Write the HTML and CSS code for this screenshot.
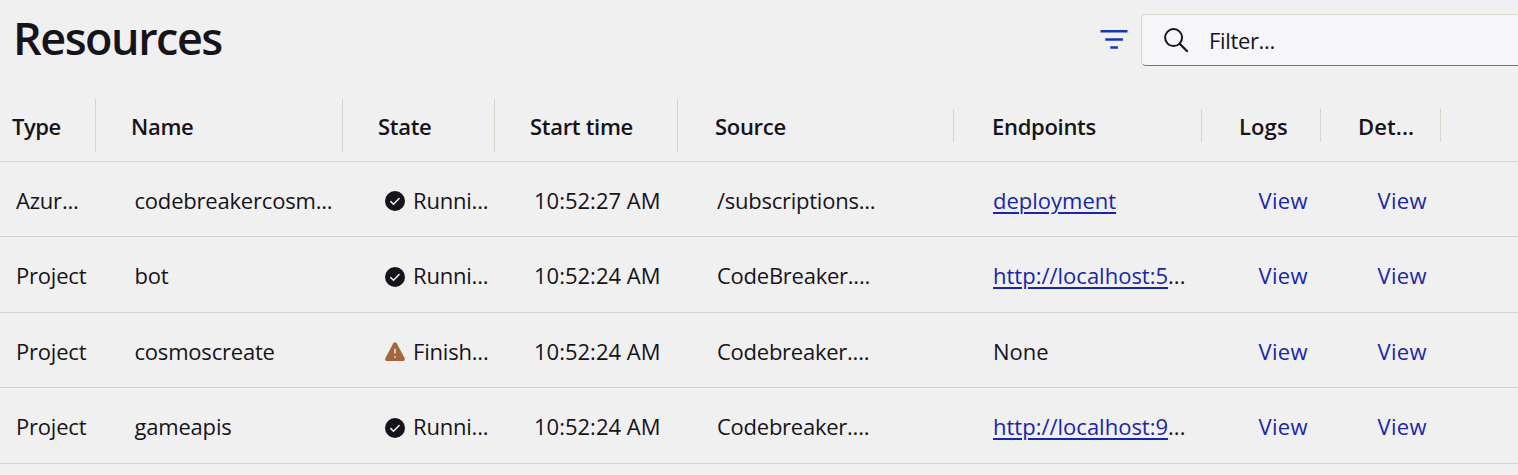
FILE: index.html
```html
<!DOCTYPE html>
<html lang="en">
<head>
<meta charset="utf-8">
<title>Resources</title>
<link rel="stylesheet" href="styles.css">
</head>
<body>
<svg class="sprite" width="0" height="0" aria-hidden="true">
  <symbol id="ok" viewBox="0 0 20 20">
    <circle cx="10" cy="10" r="10" fill="#17131a"/>
    <path d="M5.8 10.6l2.7 2.6 5.6-5.7" fill="none" stroke="#f0f0f0" stroke-width="1.5" stroke-linecap="round"/>
  </symbol>
  <symbol id="warn" viewBox="0 0 20 20">
    <path d="M8.3 1.2a2 2 0 0 1 3.4 0l8 15a2 2 0 0 1-1.8 2.9H2.1a2 2 0 0 1-1.8-2.9z" fill="#a4663f"/>
    <path d="M10 6.8v4.7M10 14.2v1.6" stroke="#f4e8e0" stroke-width="1.5"/>
  </symbol>
</svg>
<header class="toolbar">
  <h1 class="title">Resources</h1>
  <div class="tools">
    <svg class="filter-icon" width="28" height="20" viewBox="0 0 28 20"><path d="M0.5 1.2h27M5.3 9.4h17.6M10.3 17.5h7.6" stroke="#1437b8" stroke-width="2.5" fill="none"/></svg>
    <div class="search">
      <svg class="search-icon" width="24" height="25" viewBox="0 0 24 25"><circle cx="9.6" cy="9.6" r="8.5" fill="none" stroke="#17131a" stroke-width="2"/><path d="M15.7 15.7l7.2 7.4" stroke="#17131a" stroke-width="2.2" stroke-linecap="round"/></svg>
      <span class="placeholder">Filter...</span>
    </div>
  </div>
</header>
<main class="grid">
  <div class="row head">
    <div class="th tall"><span>Type</span></div><div class="th tall"><span>Name</span></div><div class="th tall"><span>State</span></div><div class="th tall"><span>Start time</span></div><div class="th"><span>Source</span></div><div class="th"><span>Endpoints</span></div><div class="th short"><span>Logs</span></div><div class="th short"><span>Det...</span></div>
  </div>
  <div class="row">
    <div class="type">Azur...</div><div class="name">codebreakercosm...</div><div class="state"><svg class="status"><use href="#ok"/></svg><span>Runni...</span></div><div class="time">10:52:27 AM</div><div class="source">/subscriptions...</div><div class="endpoint"><a>deployment</a></div><div class="view">View</div><div class="view">View</div>
  </div>
  <div class="row high">
    <div class="type">Project</div><div class="name">bot</div><div class="state"><svg class="status"><use href="#ok"/></svg><span>Runni...</span></div><div class="time">10:52:24 AM</div><div class="source">CodeBreaker....</div><div class="endpoint"><a>http://localhost:5</a>...</div><div class="view">View</div><div class="view">View</div>
  </div>
  <div class="row">
    <div class="type">Project</div><div class="name">cosmoscreate</div><div class="state"><svg class="status"><use href="#warn"/></svg><span>Finish...</span></div><div class="time">10:52:24 AM</div><div class="source">Codebreaker....</div><div class="endpoint">None</div><div class="view">View</div><div class="view">View</div>
  </div>
  <div class="row high">
    <div class="type">Project</div><div class="name">gameapis</div><div class="state"><svg class="status"><use href="#ok"/></svg><span>Runni...</span></div><div class="time">10:52:24 AM</div><div class="source">Codebreaker....</div><div class="endpoint"><a>http://localhost:9</a>...</div><div class="view">View</div><div class="view">View</div>
  </div>
</main>
</body>
</html>
```
FILE: styles.css
```css
* { box-sizing: border-box; }
body { margin: 0; height: 475px; overflow: hidden; background: #f0f0f0; color: #17131a; font: 22px/30px "Open Sans", "Noto Sans", sans-serif; white-space: nowrap; }
.sprite { display: block; }
.toolbar { display: flex; justify-content: space-between; height: 90px; padding-left: 13px; }
.title { margin: 7px 0 0; font-size: 45px; line-height: 62px; font-weight: 600; letter-spacing: -1.5px; }
.tools { display: flex; align-items: flex-start; gap: 13px; padding-top: 14px; }
.filter-icon { margin-top: 16px; }
.search { display: flex; align-items: center; gap: 21px; width: 377px; height: 52px; padding-left: 22px; background: #f6f6f9; border: 1px solid #ddd5cc; border-right: 0; border-bottom-color: #a4663f; border-radius: 5px 0 0 5px; }
.placeholder { margin-top: 0; letter-spacing: -0.35px; }
.row { display: grid; grid-template-columns: 96px 247px 152px 183px 276px 248px 119px 120px 1fr; height: 75px; align-items: center; border-bottom: 1px solid #d9d2c8; padding-top: 1px; letter-spacing: -0.2px; }
.row.high { height: 76px; padding-top: 0; }
.row.head { height: 72px; padding: 0 0 1px; font-weight: 600; letter-spacing: -0.3px; }
.th { display: flex; align-items: center; height: 33px; padding: 2px 0 0 37px; border-right: 1px solid #d9d2c8; }
.th:first-child { padding-left: 12px; letter-spacing: -0.5px; }
.th:nth-child(2) { padding-left: 35px; }
.th.tall { height: 53px; }
.th:nth-child(n+3) { padding-left: 35px; }
.th:nth-child(n+5) { padding-left: 37px; }
.th:nth-child(n+6) { padding-left: 38px; }
.th.short { padding-left: 37px; letter-spacing: 0.1px; }
.type { padding-left: 16px; }
.name { padding-left: 38.5px; }
.state { display: flex; align-items: center; gap: 8px; padding-left: 42px; }
.status { width: 20px; height: 20px; margin-top: 2px; }
.high .status { margin-top: 4px; }
.time { padding-left: 39px; letter-spacing: 0; }
.source { padding-left: 39px; letter-spacing: -0.25px; }
.endpoint { padding-left: 39px; letter-spacing: 0; }
.endpoint a, .view { color: #1a26a8; }
.endpoint a { text-decoration: underline; text-decoration-thickness: 2px; text-underline-offset: 3px; }
.view { padding-left: 56.5px; letter-spacing: 0.3px; }
```
